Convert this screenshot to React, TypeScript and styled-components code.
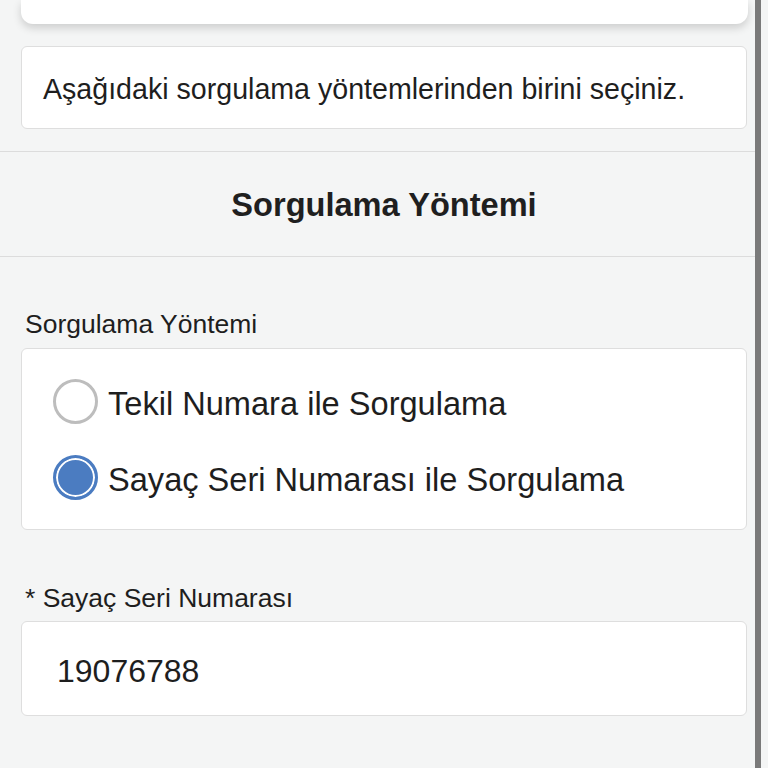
import React, { useState } from 'react';
import styled, { createGlobalStyle } from 'styled-components';

const GlobalStyle = createGlobalStyle`
  html, body {
    margin: 0;
    padding: 0;
    background: #f4f5f5;
  }
  body {
    font-family: "Liberation Sans", Arial, Helvetica, sans-serif;
    color: #1e1e1e;
  }
`;

const Page = styled.div`
  position: relative;
  display: flex;
  flex-direction: column;
  width: 768px;
  height: 768px;
  overflow: hidden;
  background: #f4f5f5;
`;

// scrollbar thumb lying over the page's right edge
const ScrollThumb = styled.div`
  position: absolute;
  top: 0;
  bottom: 0;
  right: 7px;
  width: 6px;
  background: #7a7a7a;
`;

const CardArea = styled.div`
  display: flex;
  flex-direction: column;
  padding: 0 20px 0 21px;
`;

const TopCard = styled.div`
  height: 24px;
  background: #ffffff;
  border-radius: 0 0 12px 12px;
  box-shadow: 0 4px 9px rgba(0, 0, 0, 0.16);
`;

const Card = styled.div`
  background: #ffffff;
  border: 1px solid #dedede;
  border-radius: 6px;
  margin-right: 1px;
`;

const IntroCard = styled(Card)`
  margin-top: 22px;
  height: 81px;
  display: flex;
  align-items: center;
  padding-left: 21px;
  padding-top: 3px;
  box-sizing: border-box;
  height: 83px;
  font-size: 28.6px;
`;

const SectionHeader = styled.div`
  margin-top: 22px;
  margin-right: 13px;
  height: 104px;
  border-top: 1px solid #dcdcdc;
  border-bottom: 1px solid #dcdcdc;
  display: flex;
  align-items: center;
  justify-content: center;
  padding-left: 13px;
  padding-top: 2px;
  box-sizing: border-box;
  height: 106px;
  font-weight: 700;
  font-size: 32.6px;
  color: #1f1f1f;
`;

const FieldLabel = styled.div<{ $top: number }>`
  margin-top: ${(p) => p.$top}px;
  padding-left: 4px;
  font-size: 26.5px;
  line-height: 30px;
  height: 30px;
`;

const RadioCard = styled(Card)`
  margin-top: 9px;
  height: 180px;
  display: flex;
  flex-direction: column;
  justify-content: center;
  gap: 31px;
  padding-left: 31px;
`;

const RadioRow = styled.label`
  display: flex;
  align-items: center;
  gap: 10px;
  font-size: 32.6px;
  cursor: pointer;
`;

const RadioText = styled.span`
  padding-top: 6px;
`;

const RadioDot = styled.span<{ $checked: boolean }>`
  box-sizing: border-box;
  width: 45px;
  height: 45px;
  border-radius: 50%;
  flex-shrink: 0;
  border: 3px solid ${(p) => (p.$checked ? '#4b7cc1' : '#bdbdbd')};
  background: ${(p) => (p.$checked ? '#4b7cc1' : '#ffffff')};
  box-shadow: ${(p) => (p.$checked ? 'inset 0 0 0 2px #ffffff' : 'none')};
`;

const InputBox = styled(Card)`
  margin-top: 8px;
  height: 95px;
  box-sizing: border-box;
  display: flex;
  align-items: center;
  padding-left: 35px;
  padding-top: 5px;
  font-size: 32px;
`;

const options = ['Tekil Numara ile Sorgulama', 'Sayaç Seri Numarası ile Sorgulama'];

export default function App(): JSX.Element {
  const [selected, setSelected] = useState(1);

  return (
    <>
      <GlobalStyle />
      <Page>
        <CardArea>
          <TopCard />
          <IntroCard>Aşağıdaki sorgulama yöntemlerinden birini seçiniz.</IntroCard>
        </CardArea>
        <SectionHeader>Sorgulama Yöntemi</SectionHeader>
        <CardArea>
          <FieldLabel $top={52}>Sorgulama Yöntemi</FieldLabel>
          <RadioCard>
            {options.map((label, i) => (
              <RadioRow key={label} onClick={() => setSelected(i)}>
                <RadioDot $checked={selected === i} />
                <RadioText>{label}</RadioText>
              </RadioRow>
            ))}
          </RadioCard>
          <FieldLabel $top={53}>* Sayaç Seri Numarası</FieldLabel>
          <InputBox>19076788</InputBox>
        </CardArea>
        <ScrollThumb />
      </Page>
    </>
  );
}
